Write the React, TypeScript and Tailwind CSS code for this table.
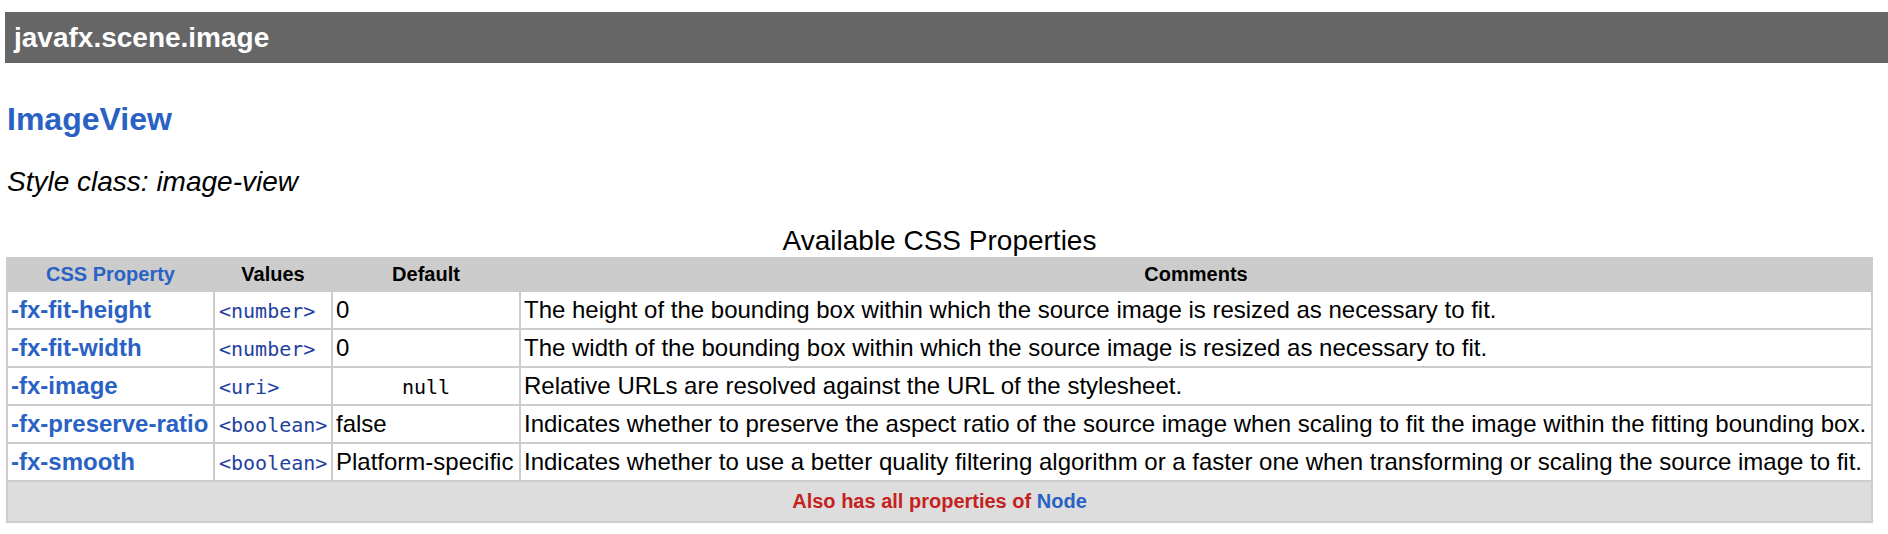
const rows = [
  {
    name: '-fx-fit-height',
    values: '<number>',
    def: '0',
    mono: false,
    comment: 'The height of the bounding box within which the source image is resized as necessary to fit.',
  },
  {
    name: '-fx-fit-width',
    values: '<number>',
    def: '0',
    mono: false,
    comment: 'The width of the bounding box within which the source image is resized as necessary to fit.',
  },
  {
    name: '-fx-image',
    values: '<uri>',
    def: 'null',
    mono: true,
    comment: 'Relative URLs are resolved against the URL of the stylesheet.',
  },
  {
    name: '-fx-preserve-ratio',
    values: '<boolean>',
    def: 'false',
    mono: false,
    comment: 'Indicates whether to preserve the aspect ratio of the source image when scaling to fit the image within the fitting bounding box.',
  },
  {
    name: '-fx-smooth',
    values: '<boolean>',
    def: 'Platform-specific',
    mono: false,
    comment: 'Indicates whether to use a better quality filtering algorithm or a faster one when transforming or scaling the source image to fit.',
  },
]

export default function App() {
  return (
    <div className="min-h-[534px] bg-white text-black font-['Liberation_Sans',Arial,sans-serif] overflow-hidden">
      {/* package bar */}
      <div className="ml-[5px] mt-[12px] h-[51px] bg-[#666666] pl-[9px] flex items-center">
        <h2 className="text-[28px] font-bold text-white leading-none">javafx.scene.image</h2>
      </div>

      <h3 className="ml-[7px] mt-[38px] h-[37px] text-[32px] leading-[37px] font-bold text-[#2962c4]">ImageView</h3>

      <p className="ml-[7px] mt-[28px] h-[32px] text-[28px] leading-[32px] italic">Style class: image-view</p>

      <table className="ml-[6px] mt-[27px] w-[1867px] table-fixed border-separate border-spacing-[2px] bg-[#cccccc]">
        <caption className="bg-white text-[28px] leading-[32px] h-[32px]">Available CSS Properties</caption>
        <colgroup>
          <col className="w-[205px]" />
          <col className="w-[116px]" />
          <col className="w-[186px]" />
          <col />
        </colgroup>
        <thead>
          <tr className="text-[20px] font-bold">
            <th className="h-[31px] p-0 bg-[#cccccc] text-[#2962c4] leading-[23px]">CSS Property</th>
            <th className="p-0 bg-[#cccccc] leading-[23px]">Values</th>
            <th className="p-0 bg-[#cccccc] leading-[23px]">Default</th>
            <th className="p-0 bg-[#cccccc] leading-[23px]">Comments</th>
          </tr>
        </thead>
        <tbody>
          {rows.map((r) => (
            <tr key={r.name} className="text-[24px]">
              <td className="h-[36px] bg-white px-[3px] py-0 leading-[28px] font-bold text-[#2962c4] whitespace-nowrap">{r.name}</td>
              <td className="bg-white px-[4px] py-0 leading-[28px] whitespace-nowrap">
                <code className="font-['DejaVu_Sans_Mono',monospace] text-[20px] text-[#1f3f9f]">{r.values}</code>
              </td>
              {r.mono ? (
                <td className="bg-white px-[3px] py-0 text-center leading-[28px]">
                  <code className="font-['DejaVu_Sans_Mono',monospace] text-[20px]">{r.def}</code>
                </td>
              ) : (
                <td className="bg-white px-[3px] py-0 leading-[28px] whitespace-nowrap">{r.def}</td>
              )}
              <td className="bg-white px-[3px] py-0 leading-[28px] whitespace-nowrap">{r.comment}</td>
            </tr>
          ))}
          <tr>
            <td colSpan={4} className="h-[39px] bg-[#dddddd] p-0 text-center text-[20px] font-bold leading-[23px]">
              <span className="text-[#c5221f]">Also has all properties of </span>
              <span className="text-[#2962c4]">Node</span>
            </td>
          </tr>
        </tbody>
      </table>
    </div>
  )
}
